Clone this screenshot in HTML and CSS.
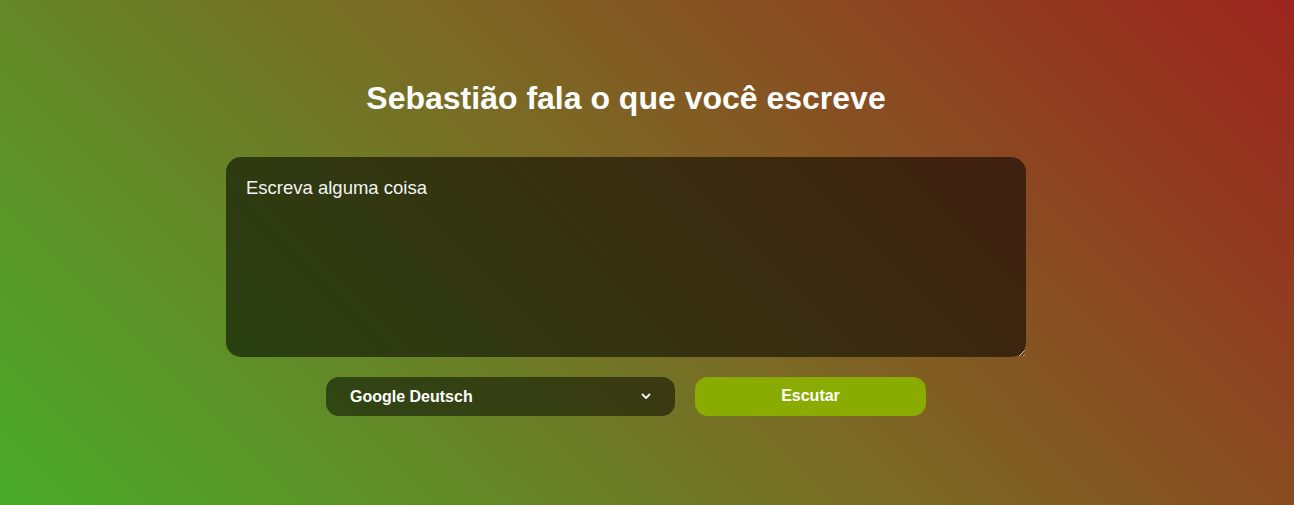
FILE: index.html
```html
<!DOCTYPE html>
<html lang="pt">
<head>
<meta charset="utf-8">
<title>Sebastião fala o que você escreve</title>
<link rel="stylesheet" href="styles.css">
</head>
<body>
<main class="app">
  <h1 class="title">Sebastião fala o que você escreve</h1>
  <textarea class="text-input" placeholder="Escreva alguma coisa"></textarea>
  <div class="controls">
    <div class="voice-select">
      <span class="voice-name">Google Deutsch</span>
      <svg class="chevron" width="10" height="7" viewBox="0 0 10 7"><path d="M1.5 1.5 L5 5 L8.5 1.5" fill="none" stroke="#fff" stroke-width="1.8" stroke-linecap="round" stroke-linejoin="round"/></svg>
    </div>
    <button class="listen-btn">Escutar</button>
  </div>
</main>
</body>
</html>
```
FILE: styles.css
```css
html, body {
  margin: 0;
  height: 100%;
}
body {
  background: linear-gradient(45deg, #4aab2a 0%, #7a6a24 50%, #9c241e 100%);
  font-family: "Liberation Sans", Arial, sans-serif;
  color: #fff;
  overflow: hidden;
}
.app {
  box-sizing: border-box;
  width: calc(100% - 42px);
  padding-top: 80px;
  display: flex;
  flex-direction: column;
  align-items: center;
}
.title {
  margin: 0 0 40px;
  font-size: 32px;
  line-height: 37px;
  font-weight: bold;
}
.text-input {
  box-sizing: border-box;
  width: 800px;
  height: 200px;
  padding: 20px;
  border: none;
  border-radius: 15px;
  background: rgba(0, 0, 0, 0.55);
  color: #fff;
  font-family: "Liberation Sans", Arial, sans-serif;
  font-size: 18.5px;
  line-height: 22px;
  outline: none;
  display: block;
}
.text-input::placeholder {
  color: #f2f4f4;
  opacity: 1;
}
.controls {
  margin-top: 20px;
  display: flex;
  gap: 20px;
}
.voice-select {
  box-sizing: border-box;
  width: 349px;
  height: 39px;
  padding: 0 24px;
  border-radius: 13px;
  background: rgba(0, 0, 0, 0.5);
  display: flex;
  align-items: center;
  justify-content: space-between;
  font-size: 16px;
  font-weight: bold;
}
.listen-btn {
  width: 231px;
  height: 39px;
  border: none;
  border-radius: 13px;
  background: #8aab00;
  color: #fff;
  font-family: "Liberation Sans", Arial, sans-serif;
  font-size: 16px;
  font-weight: bold;
  padding: 0 0 2px;
}
```
